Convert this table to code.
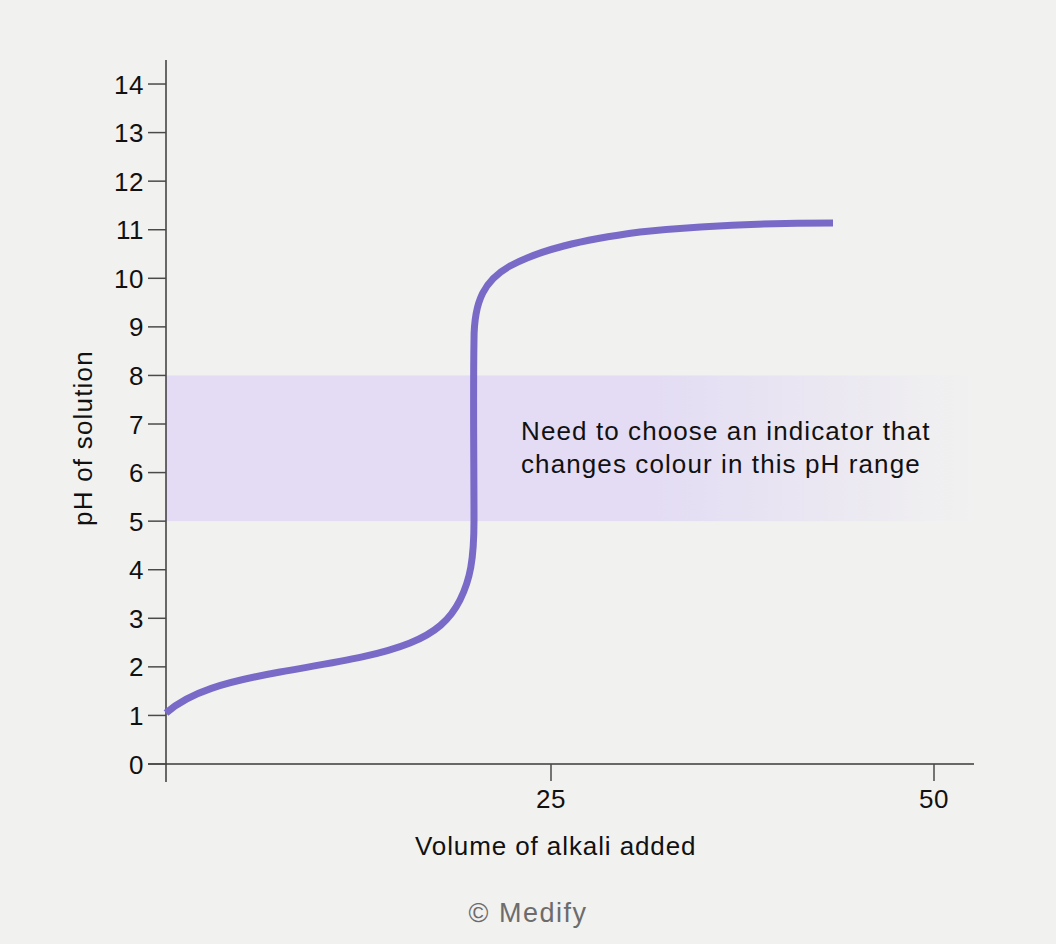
const PH_TICKS = Array.from({ length: 15 }, (_, i) => i);

// pH value -> y pixel on the chart
const phY = (p: number) => 764 - p * 48.57;

const CURVE =
  'M166,713 C190,692 225,682 280,672 C330,663 375,657 410,643 C435,633 450,620 460,600 C470,580 474,560 474,520 C474,460 473,400 474,340 C474,300 485,280 510,266 C540,250 580,240 640,232 C700,226 760,223 833,223';

export default function App() {
  return (
    <div
      className="w-[1056px] h-[944px] bg-[#f1f1f0] text-[#111111] overflow-hidden"
      style={{ fontFamily: '"Liberation Sans", Arial, sans-serif' }}
    >
      <svg width="1056" height="880" viewBox="0 0 1056 880" className="block">
        <defs>
          <linearGradient id="band" x1="166" y1="0" x2="975" y2="0" gradientUnits="userSpaceOnUse">
            <stop offset="0" stopColor="#e3dcf4" />
            <stop offset="0.6" stopColor="#e3dcf4" />
            <stop offset="1" stopColor="#e3dcf4" stopOpacity="0" />
          </linearGradient>
        </defs>

        {/* indicator range band, pH 5 to 8 */}
        <rect x="166" y={phY(8)} width="809" height={phY(5) - phY(8)} fill="url(#band)" />

        {/* axes */}
        <line x1="166" y1="60" x2="166" y2="782" stroke="#3a3a3a" strokeWidth="1.5" />
        <line x1="148" y1="764" x2="974" y2="764" stroke="#3a3a3a" strokeWidth="1.5" />

        {PH_TICKS.map((p) => (
          <g key={p}>
            <line x1="148" y1={phY(p)} x2="166" y2={phY(p)} stroke="#4a4a4a" strokeWidth="1.5" />
            <text
              x="144"
              y={phY(p) + 9.5}
              textAnchor="end"
              fontSize="26"
              letterSpacing="0.5"
              fill="#111"
            >
              {p}
            </text>
          </g>
        ))}

        {[
          { x: 551, label: '25' },
          { x: 934, label: '50' },
        ].map((t) => (
          <g key={t.label}>
            <line x1={t.x} y1="764" x2={t.x} y2="781" stroke="#4a4a4a" strokeWidth="1.5" />
            <text x={t.x} y="808" textAnchor="middle" fontSize="26" letterSpacing="0.5" fill="#111">
              {t.label}
            </text>
          </g>
        ))}

        {/* titration curve */}
        <path d={CURVE} fill="none" stroke="#7a6ac8" strokeWidth="7" strokeLinecap="butt" />

        <text x="521" y="440" fontSize="26" letterSpacing="1.1" fill="#111">
          Need to choose an indicator that
        </text>
        <text x="521" y="473" fontSize="26" letterSpacing="1.1" fill="#111">
          changes colour in this pH range
        </text>

        <text
          transform="translate(92,438) rotate(-90)"
          textAnchor="middle"
          fontSize="26"
          letterSpacing="1.2"
          fill="#111"
        >
          pH of solution
        </text>

        <text x="415" y="855" fontSize="26" letterSpacing="0.9" fill="#111">
          Volume of alkali added
        </text>
      </svg>

      <div className="mt-[20px] text-center text-[27px] leading-none tracking-[1.5px] text-[#6c6c6c]">
        © Medify
      </div>
    </div>
  );
}
